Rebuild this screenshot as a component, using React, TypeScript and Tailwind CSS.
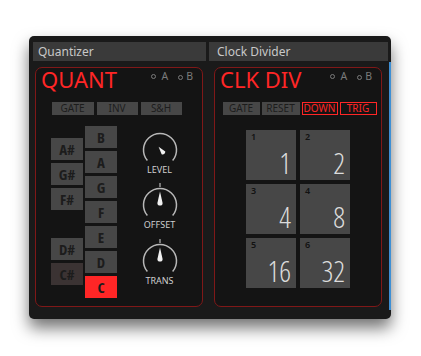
import React from 'react';

const font = { fontFamily: '"Noto Sans", "Open Sans", sans-serif' };
const condensed = { fontFamily: '"Open Sans", "Noto Sans", sans-serif' };

const Dot = () => <span className="inline-block w-[5px] h-[5px] rounded-full border border-[#7a7a7a]" />;

const Ports = () => (
  <div className="flex items-center mt-[3px] text-[10.5px] leading-[11px] text-[#7a7a7a]">
    <Dot />
    <span className="ml-[5px]">A</span>
    <span className="ml-[10px]"><Dot /></span>
    <span className="ml-[3px]">B</span>
  </div>
);

const Knob = ({ label, value, tick }: { label: string; value: 'max' | 'mid'; tick: boolean }) => (
  <div className="flex flex-col items-center w-[40px]">
    <svg width="40" height="36" viewBox="0 0 40 36" className="overflow-visible">
      <path d="M 7.36 32.6 A 16.5 16.5 0 1 1 32.64 32.6" fill="none" stroke="#b8b8b8" strokeWidth="1.5" />
      {tick && <line x1="20" y1="0" x2="20" y2="4" stroke="#b8b8b8" strokeWidth="1.2" />}
      {value === 'mid' ? (
        <path d="M 17.4 20 L 20 8.5 L 22.6 20 A 2.6 2.6 0 0 1 17.4 20 Z" fill="#f0f0f0" />
      ) : (
        <path d="M 21.6 26.2 L 18.6 18.8 L 25.3 23.6 A 2.6 2.6 0 0 1 21.6 26.2 Z" fill="#f0f0f0" />
      )}
    </svg>
    <div className="h-[12px] leading-[12px] text-[9px] text-[#cfcfcf] whitespace-nowrap">{label}</div>
  </div>
);

const naturals = ['B', 'A', 'G', 'F', 'E', 'D', 'C'];
const sharps = ['A#', 'G#', 'F#', '', 'D#', 'C#'];

const keyText = 'h-[22px] flex items-center justify-center text-[15px] font-bold font-stretch-semi-condensed text-[#1c1c1c]';

const Quant = () => (
  <div className="mt-[6px] ml-[2px] w-[168px] h-[240px] border border-[#801818] rounded-[7px] bg-[#141414] flex flex-col">
    <div className="flex items-start justify-between pl-[5px] pr-[9px]">
      <div className="text-[22px] leading-[22px] text-[#ff2626]">QUANT</div>
      <Ports />
    </div>
    <div className="flex gap-[3px] mt-[12px] ml-[15.5px] text-[10px] leading-[13px] text-[#1c1c1c] text-center">
      <div className="w-[42px] h-[13px] bg-[#474747]">GATE</div>
      <div className="w-[41px] h-[13px] bg-[#474747]">INV</div>
      <div className="w-[41px] h-[13px] bg-[#474747]">S&amp;H</div>
    </div>
    <div className="flex mt-[11px] ml-[15px]">
      <div className="flex flex-col gap-[3px] pt-[12px] w-[32px]" style={condensed}>
        {sharps.map((s, i) =>
          s ? (
            <div key={i} className={`${keyText} ${s === 'C#' ? 'bg-[#3b3333]' : 'bg-[#474747]'}`}>
              {s}
            </div>
          ) : (
            <div key={i} className="h-[22px]" />
          )
        )}
      </div>
      <div className="flex flex-col gap-[3px] ml-[2px] w-[32px]" style={condensed}>
        {naturals.map((n) => (
          <div key={n} className={`${keyText} ${n === 'C' ? 'bg-[#ff2626]' : 'bg-[#474747]'}`}>
            {n}
          </div>
        ))}
      </div>
      <div className="flex flex-col gap-[7.5px] ml-[22.5px] mt-[1.5px]">
        <Knob label="LEVEL" value="max" tick={false} />
        <Knob label="OFFSET" value="mid" tick />
        <Knob label="TRANS" value="mid" tick />
      </div>
    </div>
  </div>
);

const cells = [
  [1, 1],
  [2, 2],
  [3, 4],
  [4, 8],
  [5, 16],
  [6, 32],
];

const ClkDiv = () => (
  <div className="mt-[6px] ml-[5px] w-[168px] h-[240px] border border-[#801818] rounded-[7px] bg-[#141414] flex flex-col">
    <div className="flex items-start justify-between pl-[5px] pr-[9px]">
      <div className="text-[22px] leading-[22px] text-[#ff2626]">CLK DIV</div>
      <Ports />
    </div>
    <div className="flex gap-[2px] mt-[12px] ml-[7.5px] text-[10px] leading-[13px] text-center">
      <div className="w-[37px] h-[13px] bg-[#474747] text-[#1c1c1c]">GATE</div>
      <div className="w-[38px] h-[13px] bg-[#474747] text-[#1c1c1c]">RESET</div>
      <div className="w-[36px] h-[13px] border border-[#ff2626] text-[#ff2626] leading-[11px]">DOWN</div>
      <div className="w-[37px] h-[13px] border border-[#ff2626] text-[#ff2626] leading-[11px]">TRIG</div>
    </div>
    <div className="grid grid-cols-[50px_50px] gap-[4px] justify-center mt-[15px]">
      {cells.map(([n, d]) => (
        <div key={n} className="w-[50px] h-[50px] bg-[#474747] flex flex-col justify-between">
          <div className="pl-[5px] pt-[2px] text-[9px] leading-[10px] font-semibold text-[#121212]">{n}</div>
          <div
            className="self-end pr-[5px] pb-[3px] text-[29px] leading-[29px] font-light font-stretch-condensed text-[#dcdcdc]"
            style={condensed}
          >
            {d}
          </div>
        </div>
      ))}
    </div>
  </div>
);

export default function App() {
  return (
    <div className="w-[421px] h-[356px] bg-white pt-[36px] pl-[29px]" style={font}>
      <div className="w-[362px] h-[283px] rounded-[5px] bg-[#1a1a1a] shadow-[0_9px_16px_rgba(0,0,0,0.55)] flex pt-[6px] pl-[4px]">
        <div className="w-[173px] flex flex-col">
          <div className="h-[19px] bg-[#3a3a3a] pl-[5px] text-[12px] leading-[19px] text-[#c8c8c8]">Quantizer</div>
          <Quant />
        </div>
        <div className="w-[179px] ml-[3px] flex flex-col">
          <div className="h-[19px] bg-[#3a3a3a] pl-[8px] text-[12px] leading-[19px] text-[#c8c8c8]">Clock Divider</div>
          <ClkDiv />
        </div>
        <div className="w-[2px] h-[248px] mt-[20px] ml-[1px] bg-[#3d8fd4]" />
      </div>
    </div>
  );
}
